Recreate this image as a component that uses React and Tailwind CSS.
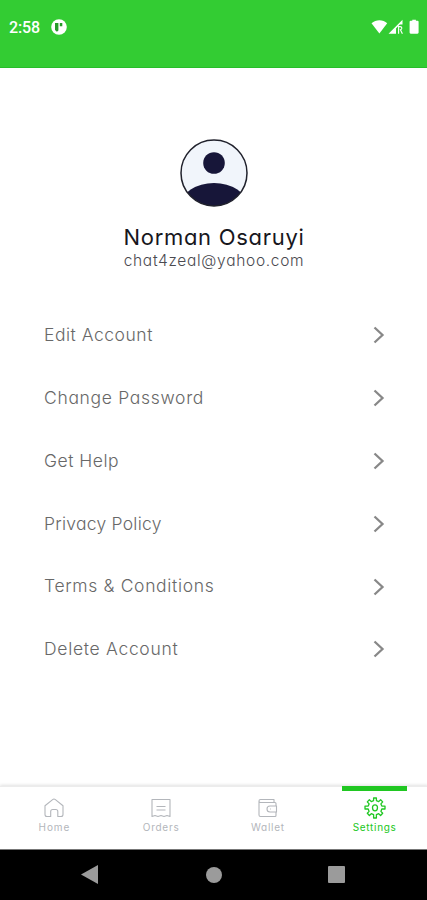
const menuItems = [
  { label: 'Edit Account', tracking: 'tracking-[0.52px]' },
  { label: 'Change Password', tracking: 'tracking-[0.68px]' },
  { label: 'Get Help', tracking: 'tracking-[0.5px]' },
  { label: 'Privacy Policy', tracking: 'tracking-[0.25px]' },
  { label: 'Terms & Conditions', tracking: 'tracking-[0.66px]' },
  { label: 'Delete Account', tracking: 'tracking-[0.7px]' },
];

const HomeIcon = () => (
  <svg width="22" height="22" viewBox="0 0 22 22" fill="none" stroke="currentColor" strokeWidth="1.1" strokeLinejoin="round">
    <path d="M2 8.7 9.6 2.6a2.2 2.2 0 0 1 2.8 0L20 8.7v8.8a2 2 0 0 1-2 2h-3.2v-5a2 2 0 0 0-2-2H9.7a2 2 0 0 0-2 2v5H4a2 2 0 0 1-2-2Z" />
  </svg>
);

const OrdersIcon = () => (
  <svg width="22" height="22" viewBox="0 0 22 22" fill="none" stroke="currentColor" strokeWidth="1.1" strokeLinejoin="round">
    <path d="M2 2.5h18v17l-3-1-3 1-3-1-3 1-3-1-3 1Z" />
    <path d="M6.5 9.5h9M6.5 13h9" />
  </svg>
);

const WalletIcon = () => (
  <svg width="22" height="22" viewBox="0 0 22 22" fill="none" stroke="currentColor" strokeWidth="1.1" strokeLinejoin="round">
    <path d="M19 9V6.5a1 1 0 0 0-1-1H3.5a1.5 1.5 0 0 1 0-3H17v3M2 4v14a1.5 1.5 0 0 0 1.5 1.5H18a1 1 0 0 0 1-1V15" />
    <path d="M19.5 9v6H13a3 3 0 0 1 0-6Z" />
    <path d="M13.2 12h.8" />
  </svg>
);

const SettingsIcon = () => (
  <svg width="22" height="22" viewBox="0 0 22 22" fill="none" stroke="currentColor" strokeWidth="1.3" strokeLinejoin="round">
    <path d="M9.6 1h2.8v2.6l2.3 1 1.9-1.8 2.1 2.1-1.8 2 .9 2.2H21v2.9h-3.2l-.9 2.4 1.8 1.9-2.1 2.2-1.9-1.8-2.3.9V21H9.6v-3.4l-2.3-.9-1.9 1.8-2.1-2.2 1.8-1.9-.9-2.4H1V9.1h3.2l.9-2.2-1.8-2 2.1-2.1 1.9 1.8 2.3-1Z" />
    <ellipse cx="11" cy="10.8" rx="2.5" ry="3" />
  </svg>
);

const tabs = [
  { label: 'Home', Icon: HomeIcon, tracking: 'tracking-[0.9px]' },
  { label: 'Orders', Icon: OrdersIcon, tracking: 'tracking-[0.75px]' },
  { label: 'Wallet', Icon: WalletIcon, tracking: 'tracking-[0.75px]' },
  { label: 'Settings', Icon: SettingsIcon, tracking: 'tracking-[0.7px]', active: true },
];

const StatusBar = () => (
  <header className="flex h-[68px] shrink-0 items-start justify-between border-b border-[#27bd2a] bg-[#33cc33] pl-[9px] pr-[7px] pt-[18px] text-white">
    <div className="flex h-5 items-center gap-[11px]">
      <span className="font-[Roboto] text-base font-medium tracking-[-0.1px]">2:58</span>
      <svg className="-mt-0.5" width="16" height="16" viewBox="0 0 16 16">
        <circle cx="8" cy="8" r="7.8" fill="white" />
        <path d="M4 4h3.4v7.4l-1.5 1.4L4 11ZM8.8 4h2.5v3.2H8.8Z" fill="#269c29" />
      </svg>
    </div>
    <div className="flex h-[18px] items-center">
      <svg width="49" height="16" viewBox="0 0 49 16" fill="white">
        <path d="M0.5 4.2C5 .2 12 .2 16.2 4.2L8.4 14.4Z" />
        <path d="M17.5 14.8 31.5.7v4.8h-2.7L25 9.5v5.3Z" />
        <path d="M27.6 14.8V7.6h1.6c2.1 0 2.2 3 .2 3.2l2 4" fill="none" stroke="white" strokeWidth="1.1" />
        <path d="M40.9 1.5V.6h3.6v.9h1.6q1.1 0 1.1 1.1v10.8q0 1.1-1.1 1.1h-6.8q-1.1 0-1.1-1.1V2.6q0-1.1 1.1-1.1Z" transform="translate(.4 .2)" />
      </svg>
    </div>
  </header>
);

const Avatar = () => (
  <svg className="block" width="68" height="68" viewBox="0 0 68 68">
    <defs>
      <clipPath id="avatar">
        <circle cx="34" cy="34" r="33" />
      </clipPath>
    </defs>
    <circle cx="34" cy="34" r="33" fill="#f1f5fb" />
    <circle cx="34" cy="24" r="10.8" fill="#171639" />
    <ellipse cx="34" cy="66" rx="33" ry="22" fill="#171639" clipPath="url(#avatar)" />
    <circle cx="34" cy="34" r="33" fill="none" stroke="#20212c" strokeWidth="1.5" />
  </svg>
);

const App = () => {
  return (
    <div className="flex h-[900px] w-[427px] flex-col overflow-hidden bg-white font-[Inter,sans-serif] [font-feature-settings:'cv11','ss03']">
      <StatusBar />

      <main className="flex-1">
        <section className="flex flex-col items-center pl-px pt-[70.5px]">
          <Avatar />
          <h1 className="mt-4 whitespace-nowrap text-[22px] font-normal leading-7 tracking-[0.7px] text-[#17171d]">Norman Osaruyi</h1>
          <p className="whitespace-nowrap text-[15.5px] font-light leading-5 tracking-[0.7px] text-[#4a4a50]">chat4zeal@yahoo.com</p>
        </section>

        <ul className="mt-[33px] pl-11 pr-[42px]">
          {menuItems.map(({ label, tracking }) => (
            <li key={label} className="flex h-[62.8px] items-center justify-between text-[#686868]">
              <span className={`mt-px whitespace-nowrap text-[17.5px] font-light ${tracking}`}>{label}</span>
              <svg className="mt-px" width="12" height="18" viewBox="0 0 12 18" fill="none" stroke="#888888" strokeWidth="2.3">
                <path d="m1.5 1.5 8 7.5-8 7.5" />
              </svg>
            </li>
          ))}
        </ul>
      </main>

      <nav className="-mr-px flex h-[63px] shrink-0 border-t border-[#ececec] bg-white pl-px shadow-[0_-1px_3px_rgba(0,0,0,0.12)]">
        {tabs.map(({ label, Icon, tracking, active }) => (
          <div key={label} className={`flex flex-1 flex-col items-center ${active ? 'text-[#20c722]' : 'text-[#b3b6bb]'}`}>
            <div className={`-mt-px h-[5px] w-[65px] ${active ? 'bg-[#20c722]' : ''}`} />
            <div className="mt-1.5">
              <Icon />
            </div>
            <span className={`whitespace-nowrap text-[10px] leading-4 ${tracking}`}>{label}</span>
          </div>
        ))}
      </nav>

      <footer className="flex h-[51px] shrink-0 items-center justify-between border-t border-[#777777] bg-black pb-px pl-[81px] pr-[82px]">
        <svg width="17" height="19" viewBox="0 0 17 19" fill="#9b9b9b">
          <path d="M0 9.5 17 0v19Z" />
        </svg>
        <div className="ml-0.5 size-4 rounded-full bg-[#9b9b9b]" />
        <div className="size-[17px] rounded-[1px] bg-[#9b9b9b]" />
      </footer>
    </div>
  );
};

export default App;
